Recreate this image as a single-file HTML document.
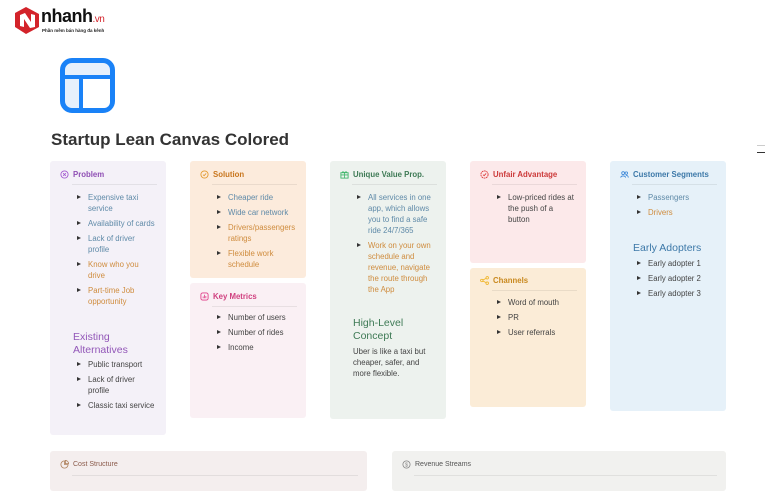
<!DOCTYPE html>
<html><head><meta charset="utf-8">
<style>
*{margin:0;padding:0;box-sizing:border-box}
body{width:765px;height:478px;background:#fff;font-family:"Liberation Sans",sans-serif;position:relative;overflow:hidden}
.card{position:absolute;border-radius:3px}
.hd{position:absolute;left:10px;top:9px;font-size:7.8px;font-weight:bold;display:flex;align-items:center}
.hd svg{width:9px;height:9px;margin-right:4px}
.dv{position:absolute;left:22px;right:9px;top:23px;height:1px;background:rgba(0,0,0,0.07)}
ul{position:absolute;left:27px;right:9px;list-style:none;font-size:7.8px;line-height:11px}
li{position:relative;padding-left:11px;margin-bottom:4px}
li:before{content:"";position:absolute;left:0;top:3px;border-left:4px solid #333;border-top:2.5px solid transparent;border-bottom:2.5px solid transparent}
.b{color:#5f8aa8}.o{color:#cf8c3e}.g{color:#444}
.sub{position:absolute;left:23px;font-size:10.5px;line-height:12.5px}
</style></head><body>
<svg style="position:absolute;left:12px;top:5px" width="30" height="30" viewBox="0 0 30 30"><path d="M3 8 L14 2 L27 9 L27 22 L14 29 L3 22Z" fill="#d3232a"/><path d="M8 10 L13 8 L19 17 L19 9 L23 10 L23 22 L18 23 L12 14 L12 22 L8 21Z" fill="#fff"/></svg>
<div style="position:absolute;left:41px;top:6px;font-size:18px;font-weight:bold;color:#111;letter-spacing:-0.5px">nhanh<span style="font-size:10px;font-weight:normal;color:#d3232a">.vn</span></div>
<div style="position:absolute;left:42px;top:28px;font-size:4.5px;color:#222;font-weight:bold">Phần mềm bán hàng đa kênh</div>
<div style="position:absolute;left:60px;top:58px;width:55px;height:55px;border:5px solid #1a82f7;border-radius:12px;background:#e6f0fc"></div>
<div style="position:absolute;left:63px;top:75px;width:49px;height:4px;background:#1a82f7"></div>
<div style="position:absolute;left:79px;top:77px;width:4px;height:34px;background:#1a82f7"></div>
<div style="position:absolute;left:83px;top:79px;width:27px;height:29px;background:#fff;border-radius:0 0 6px 0"></div>
<div style="position:absolute;left:51px;top:130px;font-size:17px;font-weight:bold;color:#333">Startup Lean Canvas Colored</div>
<div style="position:absolute;left:757px;top:145px;width:8px;height:1px;background:#ccc"></div>
<div style="position:absolute;left:757px;top:152px;width:8px;height:1px;background:#333"></div>

<div class="card" style="left:50px;top:161px;width:116px;height:274px;background:#f4f1f8">
<div class="hd" style="color:#8f4fb4"><svg viewBox="0 0 10 10"><circle cx="5" cy="5" r="4" fill="none" stroke="#a259d0" stroke-width="1"/><path d="M3.5 3.5L6.5 6.5M6.5 3.5L3.5 6.5" stroke="#a259d0" stroke-width="1"/></svg>Problem</div>
<div class="dv"></div>
<ul style="top:31px"><li class="b">Expensive taxi service</li><li class="b">Availability of cards</li><li class="b">Lack of driver profile</li><li class="o">Know who you drive</li><li class="o">Part-time Job opportunity</li></ul>
<div class="sub" style="top:170px;color:#9257b8">Existing<br>Alternatives</div>
<ul style="top:198px"><li class="g">Public transport</li><li class="g">Lack of driver profile</li><li class="g">Classic taxi service</li></ul>
</div>

<div class="card" style="left:190px;top:161px;width:116px;height:117px;background:#fcebdc">
<div class="hd" style="color:#c8761e"><svg viewBox="0 0 10 10"><circle cx="5" cy="5" r="4" fill="none" stroke="#e39a2f" stroke-width="1"/><path d="M3.3 5.2L4.6 6.3L6.8 3.8" fill="none" stroke="#e39a2f" stroke-width="1"/></svg>Solution</div>
<div class="dv"></div>
<ul style="top:31px"><li class="b">Cheaper ride</li><li class="b">Wide car network</li><li class="o">Drivers/passengers ratings</li><li class="o">Flexible work schedule</li></ul>
</div>

<div class="card" style="left:190px;top:283px;width:116px;height:135px;background:#faf0f4">
<div class="hd" style="color:#d0407f"><svg viewBox="0 0 10 10"><rect x="1" y="1" width="8" height="8" rx="2" fill="none" stroke="#e0418a" stroke-width="1"/><path d="M3.5 7V5M5 7V3M6.5 7V4.5" stroke="#e0418a" stroke-width="0.9"/></svg>Key Metrics</div>
<div class="dv"></div>
<ul style="top:29px"><li class="g">Number of users</li><li class="g">Number of rides</li><li class="g">Income</li></ul>
</div>

<div class="card" style="left:330px;top:161px;width:116px;height:258px;background:#edf2ee">
<div class="hd" style="color:#3e7a55"><svg viewBox="0 0 10 10"><rect x="1" y="3" width="8" height="6" fill="none" stroke="#3fb56a" stroke-width="1"/><path d="M1 5.5H9M5 3V9M5 3C3 1 2 2.5 3 3M5 3C7 1 8 2.5 7 3" fill="none" stroke="#3fb56a" stroke-width="0.9"/></svg>Unique Value Prop.</div>
<div class="dv"></div>
<ul style="top:31px"><li class="b">All services in one app, which allows you to find a safe ride 24/7/365</li><li class="o">Work on your own schedule and revenue, navigate the route through the App</li></ul>
<div class="sub" style="top:156px;color:#3e7a55">High-Level<br>Concept</div>
<div style="position:absolute;left:23px;top:185px;width:84px;font-size:7.8px;line-height:11px;color:#444">Uber is like a taxi but cheaper, safer, and more flexible.</div>
</div>

<div class="card" style="left:470px;top:161px;width:116px;height:102px;background:#fce9ea">
<div class="hd" style="color:#cc3a3a"><svg viewBox="0 0 10 10"><circle cx="5" cy="5" r="4" fill="none" stroke="#dd3b3b" stroke-width="1" stroke-dasharray="2 0.6"/><path d="M3.3 5.2L4.6 6.3L6.8 3.8" fill="none" stroke="#dd3b3b" stroke-width="1"/></svg>Unfair Advantage</div>
<div class="dv"></div>
<ul style="top:31px;right:0"><li class="g">Low-priced rides at<br>the push of a<br>button</li></ul>
</div>

<div class="card" style="left:470px;top:268px;width:116px;height:139px;background:#fbecd7">
<div class="hd" style="color:#c9891f;top:8px"><svg viewBox="0 0 10 10"><circle cx="2" cy="5" r="1.4" fill="none" stroke="#f0b323" stroke-width="0.9"/><circle cx="8" cy="2" r="1.4" fill="none" stroke="#f0b323" stroke-width="0.9"/><circle cx="8" cy="8" r="1.4" fill="none" stroke="#f0b323" stroke-width="0.9"/><path d="M3.2 4.4L6.8 2.6M3.2 5.6L6.8 7.4" stroke="#f0b323" stroke-width="0.9"/></svg>Channels</div>
<div class="dv" style="top:22px"></div>
<ul style="top:29px"><li class="g">Word of mouth</li><li class="g">PR</li><li class="g">User referrals</li></ul>
</div>

<div class="card" style="left:610px;top:161px;width:116px;height:250px;background:#e6f1f9">
<div class="hd" style="color:#3c78a8"><svg viewBox="0 0 10 10"><circle cx="3.5" cy="3.5" r="1.6" fill="none" stroke="#3a86d8" stroke-width="0.9"/><circle cx="7" cy="3.5" r="1.4" fill="none" stroke="#3a86d8" stroke-width="0.9"/><path d="M0.8 8.5C1 6 6 6 6.2 8.5M6.5 6C8 6 9.2 6.8 9.2 8.5" fill="none" stroke="#3a86d8" stroke-width="0.9"/></svg>Customer Segments</div>
<div class="dv"></div>
<ul style="top:31px"><li class="b">Passengers</li><li class="o">Drivers</li></ul>
<div class="sub" style="top:81px;color:#3c78a8">Early Adopters</div>
<ul style="top:97px"><li class="g">Early adopter 1</li><li class="g">Early adopter 2</li><li class="g">Early adopter 3</li></ul>
</div>

<div class="card" style="left:50px;top:451px;width:317px;height:40px;background:#f4eeee">
<div class="hd" style="color:#8a5a4a;font-weight:normal;font-size:7px"><svg viewBox="0 0 10 10"><path d="M5 1A4 4 0 1 0 9 5H5Z" fill="none" stroke="#b0835e" stroke-width="0.9"/><path d="M6 0.5V4H9.5A3.5 3.5 0 0 0 6 0.5Z" fill="none" stroke="#b0835e" stroke-width="0.9"/></svg>Cost Structure</div>
<div class="dv" style="top:24px"></div>
</div>
<div class="card" style="left:392px;top:451px;width:334px;height:40px;background:#f1f1ef">
<div class="hd" style="color:#555;font-weight:normal;font-size:7px"><svg viewBox="0 0 10 10"><circle cx="5" cy="5" r="4" fill="none" stroke="#888" stroke-width="0.9"/><text x="5" y="7.2" font-size="6" text-anchor="middle" fill="#888" font-family="Liberation Sans">$</text></svg>Revenue Streams</div>
<div class="dv" style="top:24px"></div>
</div>
</body></html>
